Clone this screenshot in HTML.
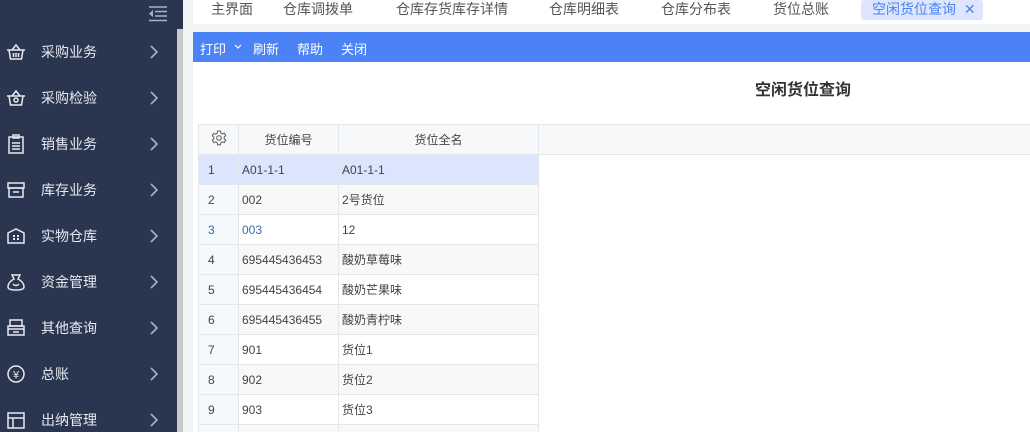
<!DOCTYPE html>
<html><head><meta charset="utf-8"><style>
*{margin:0;padding:0;box-sizing:border-box}
html,body{width:1030px;height:432px;overflow:hidden}
body{background:#f1f3f5;font-family:"Liberation Sans","Noto Sans CJK SC",sans-serif;font-size:13px;color:#333;position:relative}
.wrap{position:absolute;left:0;top:0;width:1030px;height:432px;overflow:hidden}
.side{position:absolute;left:0;top:0;width:177px;height:432px;background:#2a3650}
.sb{position:absolute;left:177px;top:29px;width:6px;height:403px;background:#c8c8c8}
.sbt{position:absolute;left:177px;top:0;width:6px;height:29px;background:#2a3650}
.item{position:absolute;left:0;width:177px;height:46px;color:#e6e9ef;font-size:14px}
.item span{position:absolute;left:41px;top:50%;transform:translateY(-50%)}
.item svg.ic{position:absolute;left:6px;top:50%;transform:translateY(-50%)}
.item .ch{position:absolute;left:149px;top:50%;transform:translateY(-50%)}
.tabs{position:absolute;left:193px;top:0;width:837px;height:24px;background:#fff}
.tab{position:absolute;top:0;height:20px;line-height:18px;font-size:14px;color:#555}
.tb{position:absolute;left:193px;top:32px;width:837px;height:30px;background:#4b83f7;color:#fff;font-size:13px}
.tb span{position:absolute;top:7px}
.main{position:absolute;left:193px;top:62px;width:837px;height:370px;background:#fff}
.title{position:absolute;left:755px;top:76px;font-size:16px;font-weight:bold;color:#333}
table{position:absolute;left:198px;top:124px;border-collapse:collapse;font-size:12px}
td{border:1px solid #e3e6ea;height:30px;padding:0 0 0 3px;color:#444}
td.n{width:40px;background:#f5f8fc;padding-left:9px}
tr.h td{background:#f7f8fa;text-align:center;padding:0;height:30px}
tr.e td{background:#f8f8f8}
tr.e td.n{background:#f5f8fc}
tr.s td{background:#dbe5fd}
tr.last td{height:7px;border-bottom:none}
.c1{width:100px}.c2{width:200px}
.rest{position:absolute;left:538px;top:124px;width:492px;height:31px;background:#f7f8fa;border-top:1px solid #e3e6ea;border-bottom:1px solid #e3e6ea}
</style></head><body><div class="wrap">
<div class="side"></div><div class="sbt"></div><div class="sb"></div>
<svg style="position:absolute;left:148px;top:6px" width="20" height="16"><g stroke="#aab2c0" stroke-width="1.5"><line x1="1" y1="1" x2="19" y2="1"/><line x1="7" y1="5.5" x2="19" y2="5.5"/><line x1="7" y1="10" x2="19" y2="10"/><line x1="1" y1="14.5" x2="19" y2="14.5"/></g><path d="M5 4 L1 7.7 L5 11Z" fill="#aab2c0"/></svg>
<div class="item" style="top:29px"><svg class="ic" width="20" height="20"><g fill="none" stroke="#e6e9ef" stroke-width="1.5"><path d="M1 8h18M3 8l1.5 9h11L17 8M6 8l4-5 4 5M7.5 11v4M10 11v4M12.5 11v4"/></g></svg><span>采购业务</span><svg class="ch" width="10" height="14"><path d="M2 1l6 6-6 6" fill="none" stroke="#aab2c0" stroke-width="1.6"/></svg></div>
<div class="item" style="top:75px"><svg class="ic" width="20" height="20"><g fill="none" stroke="#e6e9ef" stroke-width="1.5"><path d="M1 8h18M3 8l1.5 9h11L17 8M6 8l4-5 4 5"/><circle cx="10" cy="12" r="2"/></g></svg><span>采购检验</span><svg class="ch" width="10" height="14"><path d="M2 1l6 6-6 6" fill="none" stroke="#aab2c0" stroke-width="1.6"/></svg></div>
<div class="item" style="top:121px"><svg class="ic" width="20" height="20"><g fill="none" stroke="#e6e9ef" stroke-width="1.5"><rect x="3" y="3" width="14" height="16"/><rect x="7" y="1" width="6" height="3"/><path d="M6 9h8M6 12h8M6 15h8"/></g></svg><span>销售业务</span><svg class="ch" width="10" height="14"><path d="M2 1l6 6-6 6" fill="none" stroke="#aab2c0" stroke-width="1.6"/></svg></div>
<div class="item" style="top:167px"><svg class="ic" width="20" height="20"><g fill="none" stroke="#e6e9ef" stroke-width="1.5"><rect x="2" y="3" width="16" height="5"/><rect x="3" y="8" width="14" height="9"/><path d="M7 12h6"/></g></svg><span>库存业务</span><svg class="ch" width="10" height="14"><path d="M2 1l6 6-6 6" fill="none" stroke="#aab2c0" stroke-width="1.6"/></svg></div>
<div class="item" style="top:213px"><svg class="ic" width="20" height="20"><g fill="none" stroke="#e6e9ef" stroke-width="1.5"><path d="M2 17V7l8-4 8 4v10z"/></g><g fill="#e6e9ef"><rect x="7" y="9" width="2" height="2"/><rect x="11" y="9" width="2" height="2"/><rect x="7" y="12" width="2" height="2"/><rect x="11" y="12" width="2" height="2"/></g></svg><span>实物仓库</span><svg class="ch" width="10" height="14"><path d="M2 1l6 6-6 6" fill="none" stroke="#aab2c0" stroke-width="1.6"/></svg></div>
<div class="item" style="top:259px"><svg class="ic" width="20" height="20"><g fill="none" stroke="#e6e9ef" stroke-width="1.5"><path d="M6 3h8l-2 4c4 2 6 5 6 8 0 2-2 3-8 3s-8-1-8-3c0-3 2-6 6-8z"/><path d="M7 12q3 3 6 0"/></g></svg><span>资金管理</span><svg class="ch" width="10" height="14"><path d="M2 1l6 6-6 6" fill="none" stroke="#aab2c0" stroke-width="1.6"/></svg></div>
<div class="item" style="top:305px"><svg class="ic" width="20" height="20"><g fill="none" stroke="#e6e9ef" stroke-width="1.5"><rect x="4" y="2" width="12" height="6"/><rect x="2" y="8" width="16" height="9"/><path d="M2 11h16M7 14h6"/></g></svg><span>其他查询</span><svg class="ch" width="10" height="14"><path d="M2 1l6 6-6 6" fill="none" stroke="#aab2c0" stroke-width="1.6"/></svg></div>
<div class="item" style="top:351px"><svg class="ic" width="20" height="20"><circle cx="10" cy="10" r="8" fill="none" stroke="#e6e9ef" stroke-width="1.5"/><text x="10" y="14.5" font-size="11" fill="#e6e9ef" text-anchor="middle" font-family="Liberation Sans">¥</text></svg><span>总账</span><svg class="ch" width="10" height="14"><path d="M2 1l6 6-6 6" fill="none" stroke="#aab2c0" stroke-width="1.6"/></svg></div>
<div class="item" style="top:386px;height:46px"><svg class="ic" style="top:34px" width="20" height="20"><g fill="none" stroke="#e6e9ef" stroke-width="1.5"><rect x="2" y="3" width="16" height="15"/><path d="M2 8h16M7 8v10"/></g></svg><span style="top:34px">出纳管理</span><svg class="ch" style="top:34px" width="10" height="14"><path d="M2 1l6 6-6 6" fill="none" stroke="#aab2c0" stroke-width="1.6"/></svg></div>

<div class="tabs">
<div class="tab" style="left:18px">主界面</div>
<div class="tab" style="left:90px">仓库调拨单</div>
<div class="tab" style="left:203px">仓库存货库存详情</div>
<div class="tab" style="left:356px">仓库明细表</div>
<div class="tab" style="left:468px">仓库分布表</div>
<div class="tab" style="left:580px">货位总账</div>
<div class="tab" style="left:668px;width:122px;background:#dde6fc;color:#4b83f7;border-radius:3px;padding-left:11px">空闲货位查询 <span style="margin-left:4px">✕</span></div>
</div>
<div class="tb"><span style="left:7px">打印</span><svg style="position:absolute;left:41px;top:12px" width="8" height="6"><path d="M1 1l3 3 3-3" fill="none" stroke="#fff" stroke-width="1.2"/></svg><span style="left:60px">刷新</span><span style="left:104px">帮助</span><span style="left:148px">关闭</span></div>
<div class="main"></div>
<div class="title">空闲货位查询</div>
<div class="rest"></div>
<table>
<tr class="h"><td class="n" style="padding:0;text-align:center;background:#f7f8fa"><svg width="16" height="16" viewBox="0 0 16 16"><g fill="none" stroke="#666" stroke-width="1.1"><path d="M6.6 1h2.8l.4 2 1.5.9 2-.7 1.4 2.4-1.5 1.4v1.8l1.5 1.4-1.4 2.4-2-.7-1.5.9-.4 2H6.6l-.4-2-1.5-.9-2 .7L1.3 10.4l1.5-1.4V7.2L1.3 5.8l1.4-2.4 2 .7 1.5-.9z"/><circle cx="8" cy="8" r="2.3"/></g></svg></td><td class="c1">货位编号</td><td class="c2">货位全名</td></tr>
<tr class="s"><td class="n">1</td><td>A01-1-1</td><td>A01-1-1</td></tr>
<tr class="e"><td class="n">2</td><td>002</td><td>2号货位</td></tr>
<tr><td class="n" style="color:#3a6aa8">3</td><td style="color:#3a6aa8">003</td><td>12</td></tr>
<tr class="e"><td class="n">4</td><td>695445436453</td><td>酸奶草莓味</td></tr>
<tr><td class="n">5</td><td>695445436454</td><td>酸奶芒果味</td></tr>
<tr class="e"><td class="n">6</td><td>695445436455</td><td>酸奶青柠味</td></tr>
<tr><td class="n">7</td><td>901</td><td>货位1</td></tr>
<tr class="e"><td class="n">8</td><td>902</td><td>货位2</td></tr>
<tr><td class="n">9</td><td>903</td><td>货位3</td></tr>
<tr class="e last"><td class="n"></td><td></td><td></td></tr>
</table>
</div></body></html>
